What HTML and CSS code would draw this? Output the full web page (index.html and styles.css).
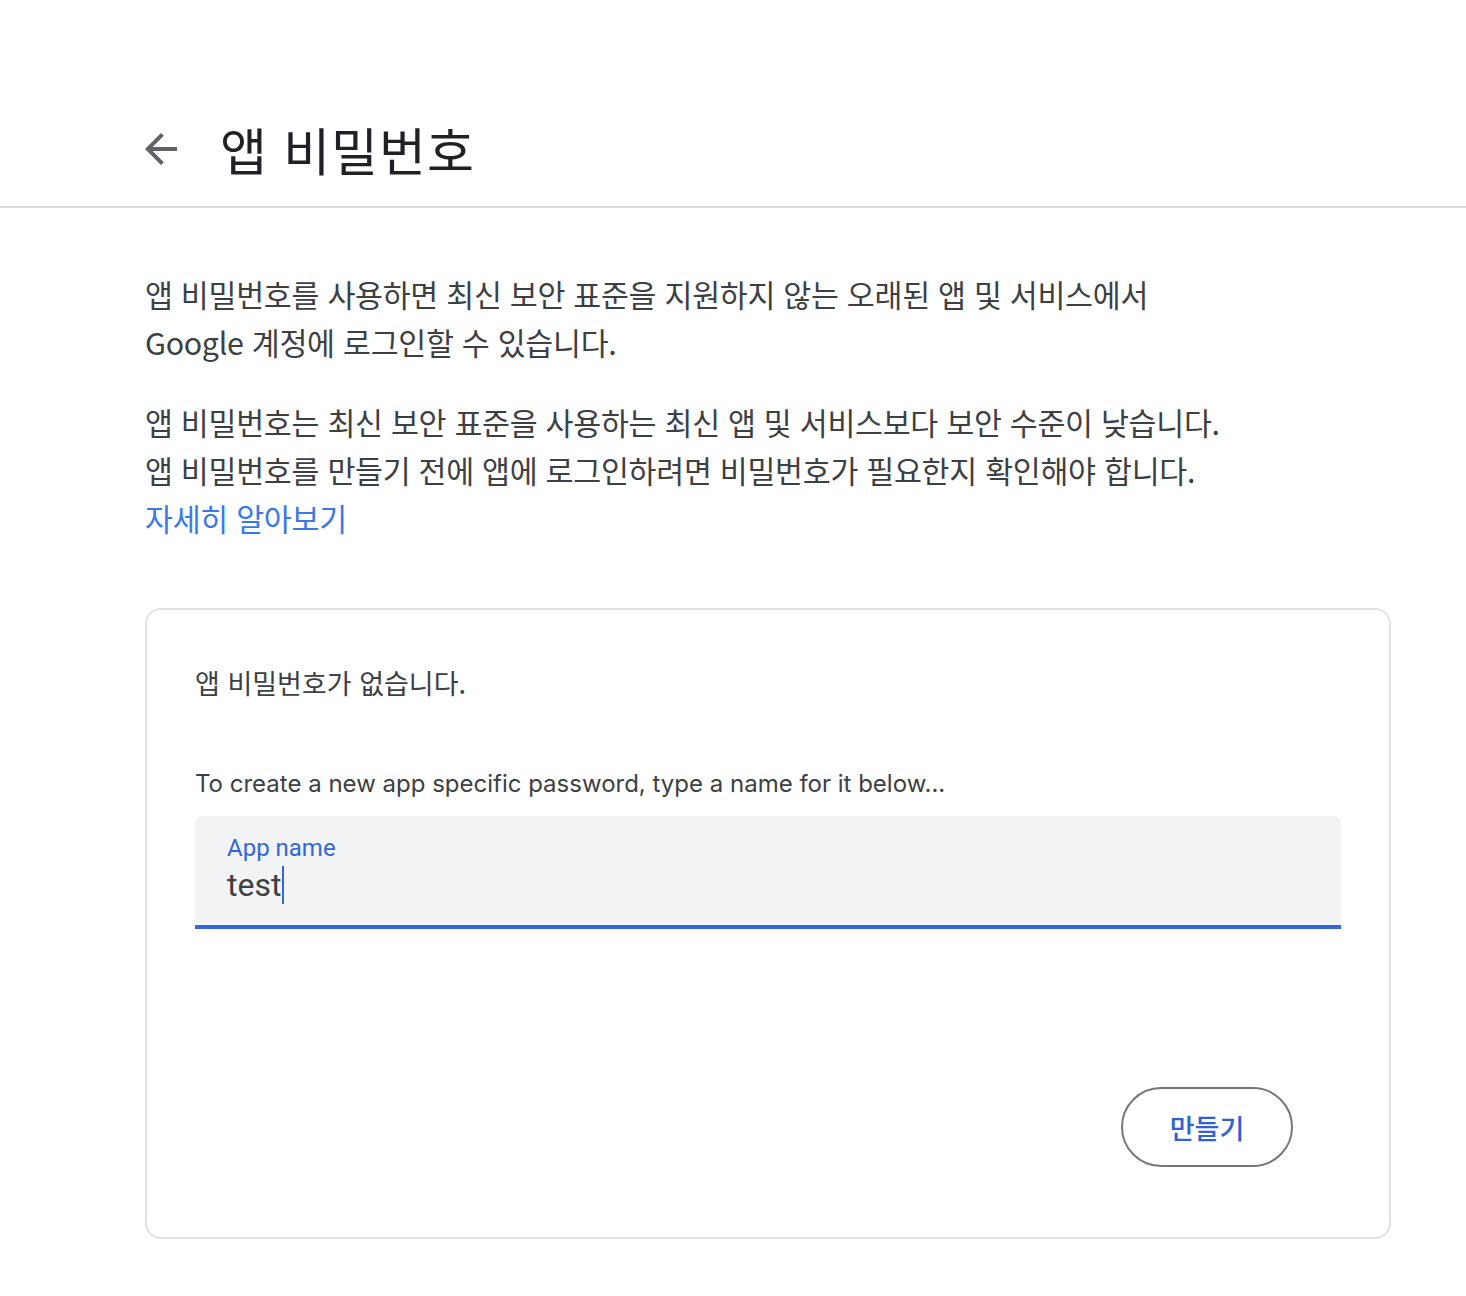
FILE: index.html
```html
<!DOCTYPE html>
<html lang="ko">
<head>
    <meta charset="UTF-8">
    <meta name="viewport" content="width=device-width, initial-scale=1.0">
    <title>앱 비밀번호</title>
    <link rel="stylesheet" href="styles.css">
</head>
<body>
    <header class="page-header">
        <button class="back-btn" aria-label="뒤로">
            <svg width="48" height="48" viewBox="0 0 24 24">
                <path d="M20 11H7.83l5.59-5.59L12 4l-8 8 8 8 1.41-1.41L7.83 13H20v-2z" fill="#5f6368"/>
            </svg>
        </button>
        <h1>앱 비밀번호</h1>
    </header>

    <main class="content">
        <p class="intro">앱 비밀번호를 사용하면 최신 보안 표준을 지원하지 않는 오래된 앱 및 서비스에서<br>Google 계정에 로그인할 수 있습니다.</p>
        <p class="intro">앱 비밀번호는 최신 보안 표준을 사용하는 최신 앱 및 서비스보다 보안 수준이 낮습니다.<br>앱 비밀번호를 만들기 전에 앱에 로그인하려면 비밀번호가 필요한지 확인해야 합니다.<br><a href="#" class="learn-more">자세히 알아보기</a></p>

        <section class="card">
            <p class="empty">앱 비밀번호가 없습니다.</p>
            <p class="hint">To create a new app specific password, type a name for it below...</p>
            <div class="field">
                <span class="field-label">App name</span>
                <span class="field-value">test<span class="caret"></span></span>
            </div>
            <div class="actions">
                <button class="create-btn">만들기</button>
            </div>
        </section>
    </main>
</body>
</html>
```

FILE: styles.css
```css
body {
    margin: 0;
    font-family: Roboto, "Noto Sans CJK KR", sans-serif;
    background-color: #fff;
    color: #3c4043;
}
.page-header {
    display: flex;
    align-items: center;
    height: 208px;
    box-sizing: border-box;
    padding: 120px 0 28px 137px;
    border-bottom: 2px solid #dadce0;
}
.back-btn {
    background: none;
    border: none;
    padding: 0;
    margin: 0 35px 0 0;
    width: 48px;
    height: 48px;
    display: flex;
    align-items: center;
    justify-content: center;
    cursor: pointer;
}
h1 {
    margin: 0;
    font-family: "Noto Sans CJK KR", sans-serif;
    font-weight: 400;
    font-size: 51px;
    color: #202124;
    letter-spacing: 1px;
}
.content {
    padding: 0 75px 0 145px;
}
.intro {
    margin: 0;
    font-family: "Noto Sans CJK KR", sans-serif;
    font-size: 30.4px;
    line-height: 48px;
    color: #3c4043;
    letter-spacing: -0.3px;
}
.intro:first-child {
    margin-top: 62px;
}
.intro + .intro {
    margin-top: 32px;
}
.learn-more {
    color: #3b78e7;
    text-decoration: none;
}
.card {
    margin-top: 66px;
    border: 2px solid #dfe1e5;
    border-radius: 16px;
    padding: 53px 48px 70px 48px;
}
.empty {
    margin: 0;
    font-family: "Noto Sans CJK KR", sans-serif;
    font-size: 27px;
    color: #3c4043;
}
.hint {
    margin: 67px 0 18px;
    font-family: Inter, Roboto, sans-serif;
    font-size: 24px;
    color: #3c4043;
}
.field {
    display: flex;
    flex-direction: column;
    background-color: #f1f3f4;
    border-radius: 8px 8px 0 0;
    border-bottom: 4px solid #3367d6;
    padding: 16px 32px 19px;
}
.field-label {
    font-size: 24px;
    color: #3367d6;
    line-height: 32px;
}
.field-value {
    display: flex;
    align-items: center;
    font-size: 32px;
    line-height: 42px;
    color: #3c4043;
}
.caret {
    display: inline-block;
    width: 2px;
    height: 38px;
    background-color: #3367d6;
    margin-left: 1px;
}
.actions {
    display: flex;
    justify-content: flex-end;
    margin-top: 158px;
    padding-right: 48px;
}
.create-btn {
    width: 172px;
    height: 80px;
    border: 2px solid #747775;
    border-radius: 40px;
    background: #fff;
    color: #2f62d1;
    font-family: "Noto Sans CJK KR", sans-serif;
    font-size: 27px;
    font-weight: 500;
    cursor: pointer;
}
```
